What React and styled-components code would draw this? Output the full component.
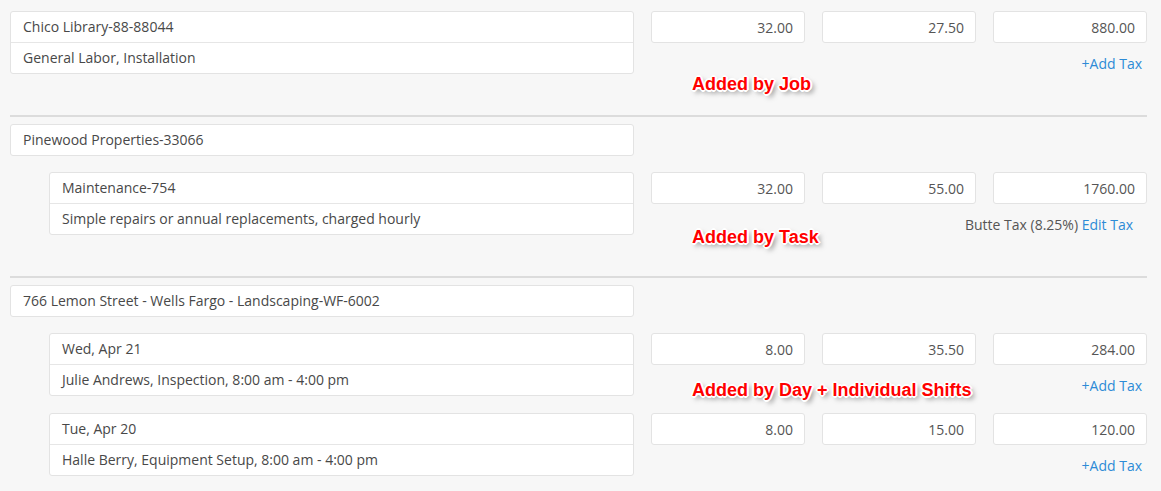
import styled, { createGlobalStyle } from "styled-components";

const GlobalStyle = createGlobalStyle`
  body {
    margin: 0;
    background: #f7f7f7;
    font-family: "Open Sans", "Liberation Sans", sans-serif;
    font-size: 14px;
    color: #484848;
  }
`;

const Page = styled.div`
  padding: 4px 14px 0 10px;
`;

const Section = styled.section`
  position: relative;
  padding: 7px 0 ${(p) => (p.last ? "14px" : "41px")};
  border-bottom: ${(p) => (p.last ? "none" : "2px solid #dcdcdc")};
  display: flex;
  flex-direction: column;
  gap: 16px;
`;

const Group = styled.div`
  display: flex;
  flex-direction: column;
  gap: 17px;
`;

const LineItem = styled.div`
  display: grid;
  grid-template-columns: 624px 1fr;
  column-gap: 17px;
  align-items: start;
`;

const LeftCell = styled.div`
  padding-left: ${(p) => (p.indent ? "39px" : "0")};
`;

const Card = styled.div`
  background: #fff;
  border: 1px solid #e3e3e3;
  border-radius: 3px;
`;

const CardRow = styled.div`
  height: 30px;
  line-height: 30px;
  padding: 0 12px;
  white-space: nowrap;
  & + & {
    border-top: 1px solid #e6e6e6;
  }
`;

const JobBar = styled.div`
  width: 624px;
`;

const RightCell = styled.div`
  display: flex;
  flex-direction: column;
`;

const Inputs = styled.div`
  display: grid;
  grid-template-columns: repeat(3, 1fr);
  column-gap: 17px;
`;

const NumInput = styled.input`
  box-sizing: border-box;
  width: 100%;
  height: 32px;
  border: 1px solid #e3e3e3;
  border-radius: 3px;
  background: #fff;
  padding: 0 11px;
  text-align: right;
  font-family: inherit;
  font-size: 14px;
  color: #555;
  outline: none;
`;

const TaxLine = styled.div`
  margin-top: 11px;
  line-height: 20px;
  text-align: right;
  padding-right: ${(p) => p.pad || "5px"};
  color: #555;
`;

const TaxLink = styled.a`
  color: #2d8bd6;
  cursor: pointer;
  text-decoration: none;
`;

const Note = styled.div`
  position: absolute;
  left: 682px;
  top: ${(p) => p.top}px;
  font-family: "Liberation Sans", Arial, sans-serif;
  font-weight: bold;
  font-size: 18px;
  line-height: 20px;
  color: #ff0000;
  white-space: nowrap;
  pointer-events: none;
  text-shadow: -1px -1px 0 #fff, 1px -1px 0 #fff, -1px 1px 0 #fff,
    1px 1px 0 #fff, 0 -2px 0 #fff, 0 2px 0 #fff, -2px 0 0 #fff, 2px 0 0 #fff,
    3px 3px 5px rgba(0, 0, 0, 0.5);
`;

const Item = ({ indent, title, sub, values, tax }) => (
  <LineItem>
    <LeftCell indent={indent}>
      <Card>
        <CardRow>{title}</CardRow>
        <CardRow>{sub}</CardRow>
      </Card>
    </LeftCell>
    <RightCell>
      <Inputs>
        {values.map((v, i) => (
          <NumInput key={i} readOnly defaultValue={v} />
        ))}
      </Inputs>
      {tax ? (
        <TaxLine pad="14px">
          {tax} <TaxLink>Edit Tax</TaxLink>
        </TaxLine>
      ) : (
        <TaxLine>
          <TaxLink>+Add Tax</TaxLink>
        </TaxLine>
      )}
    </RightCell>
  </LineItem>
);

const App = () => (
  <>
    <GlobalStyle />
    <Page>
      <Section>
        <Item
          title="Chico Library-88-88044"
          sub="General Labor, Installation"
          values={["32.00", "27.50", "880.00"]}
        />
        <Note top={70}>Added by Job</Note>
      </Section>

      <Section>
        <JobBar>
          <Card>
            <CardRow>Pinewood Properties-33066</CardRow>
          </Card>
        </JobBar>
        <Item
          indent
          title="Maintenance-754"
          sub="Simple repairs or annual replacements, charged hourly"
          values={["32.00", "55.00", "1760.00"]}
          tax="Butte Tax (8.25%)"
        />
        <Note top={110}>Added by Task</Note>
      </Section>

      <Section last>
        <JobBar>
          <Card>
            <CardRow>766 Lemon Street - Wells Fargo - Landscaping-WF-6002</CardRow>
          </Card>
        </JobBar>
        <Group>
          <Item
            indent
            title="Wed, Apr 21"
            sub="Julie Andrews, Inspection, 8:00 am - 4:00 pm"
            values={["8.00", "35.50", "284.00"]}
          />
          <Item
            indent
            title="Tue, Apr 20"
            sub="Halle Berry, Equipment Setup, 8:00 am - 4:00 pm"
            values={["8.00", "15.00", "120.00"]}
          />
        </Group>
        <Note top={102}>Added by Day + Individual Shifts</Note>
      </Section>
    </Page>
  </>
);

export default App;
